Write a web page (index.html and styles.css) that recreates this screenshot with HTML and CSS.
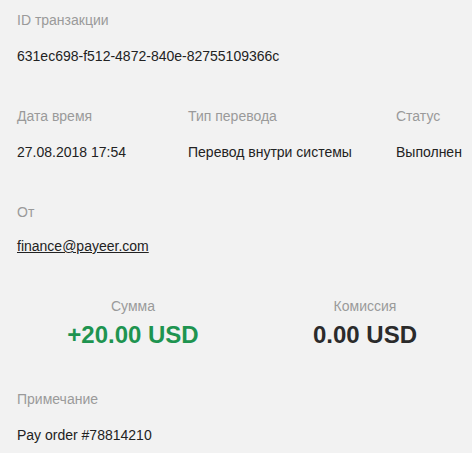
FILE: index.html
```html
<!DOCTYPE html>
<html lang="ru">
<head>
<meta charset="utf-8">
<link rel="stylesheet" href="styles.css">
</head>
<body>
<div class="page">
  <section class="block">
    <div class="label">ID транзакции</div>
    <div class="value">631ec698-f512-4872-840e-82755109366c</div>
  </section>
  <section class="block row3">
    <div class="col c1">
      <div class="label">Дата время</div>
      <div class="value">27.08.2018 17:54</div>
    </div>
    <div class="col c2">
      <div class="label">Тип перевода</div>
      <div class="value">Перевод внутри системы</div>
    </div>
    <div class="col c3">
      <div class="label">Статус</div>
      <div class="value">Выполнен</div>
    </div>
  </section>
  <section class="block">
    <div class="label">От</div>
    <div class="value email"><a class="link" href="#">finance@payeer.com</a></div>
  </section>
  <section class="block sums">
    <div class="sum">
      <div class="label">Сумма</div>
      <div class="amount plus">+20.00 USD</div>
    </div>
    <div class="sum">
      <div class="label">Комиссия</div>
      <div class="amount">0.00 USD</div>
    </div>
  </section>
  <section class="block">
    <div class="label">Примечание</div>
    <div class="value">Pay order #78814210</div>
  </section>
</div>
</body>
</html>
```
FILE: styles.css
```css
html, body {
  margin: 0;
  padding: 0;
  background: #f2f2f2;
}
body {
  font-family: "Liberation Sans", Arial, sans-serif;
  font-size: 14px;
  color: #222;
}
.page {
  padding: 10px 17px 0;
  display: flex;
  flex-direction: column;
  gap: 40px;
  white-space: nowrap;
}
.label {
  color: #9a9a9a;
  line-height: 20px;
}
.value {
  line-height: 20px;
  margin-top: 16px;
}
.value.email {
  margin-top: 14px;
}
.link {
  color: #222;
  text-decoration: underline;
}
.row3 {
  display: flex;
}
.col {
  flex: none;
}
.c1 { width: 171px; }
.c2 { width: 208px; }
.sums {
  display: grid;
  grid-template-columns: 232px 232px;
  text-align: center;
}
.amount {
  font-size: 24px;
  font-weight: bold;
  line-height: 28px;
  margin-top: 5px;
  color: #2b2b2b;
}
.amount.plus {
  color: #1e9450;
}
```
